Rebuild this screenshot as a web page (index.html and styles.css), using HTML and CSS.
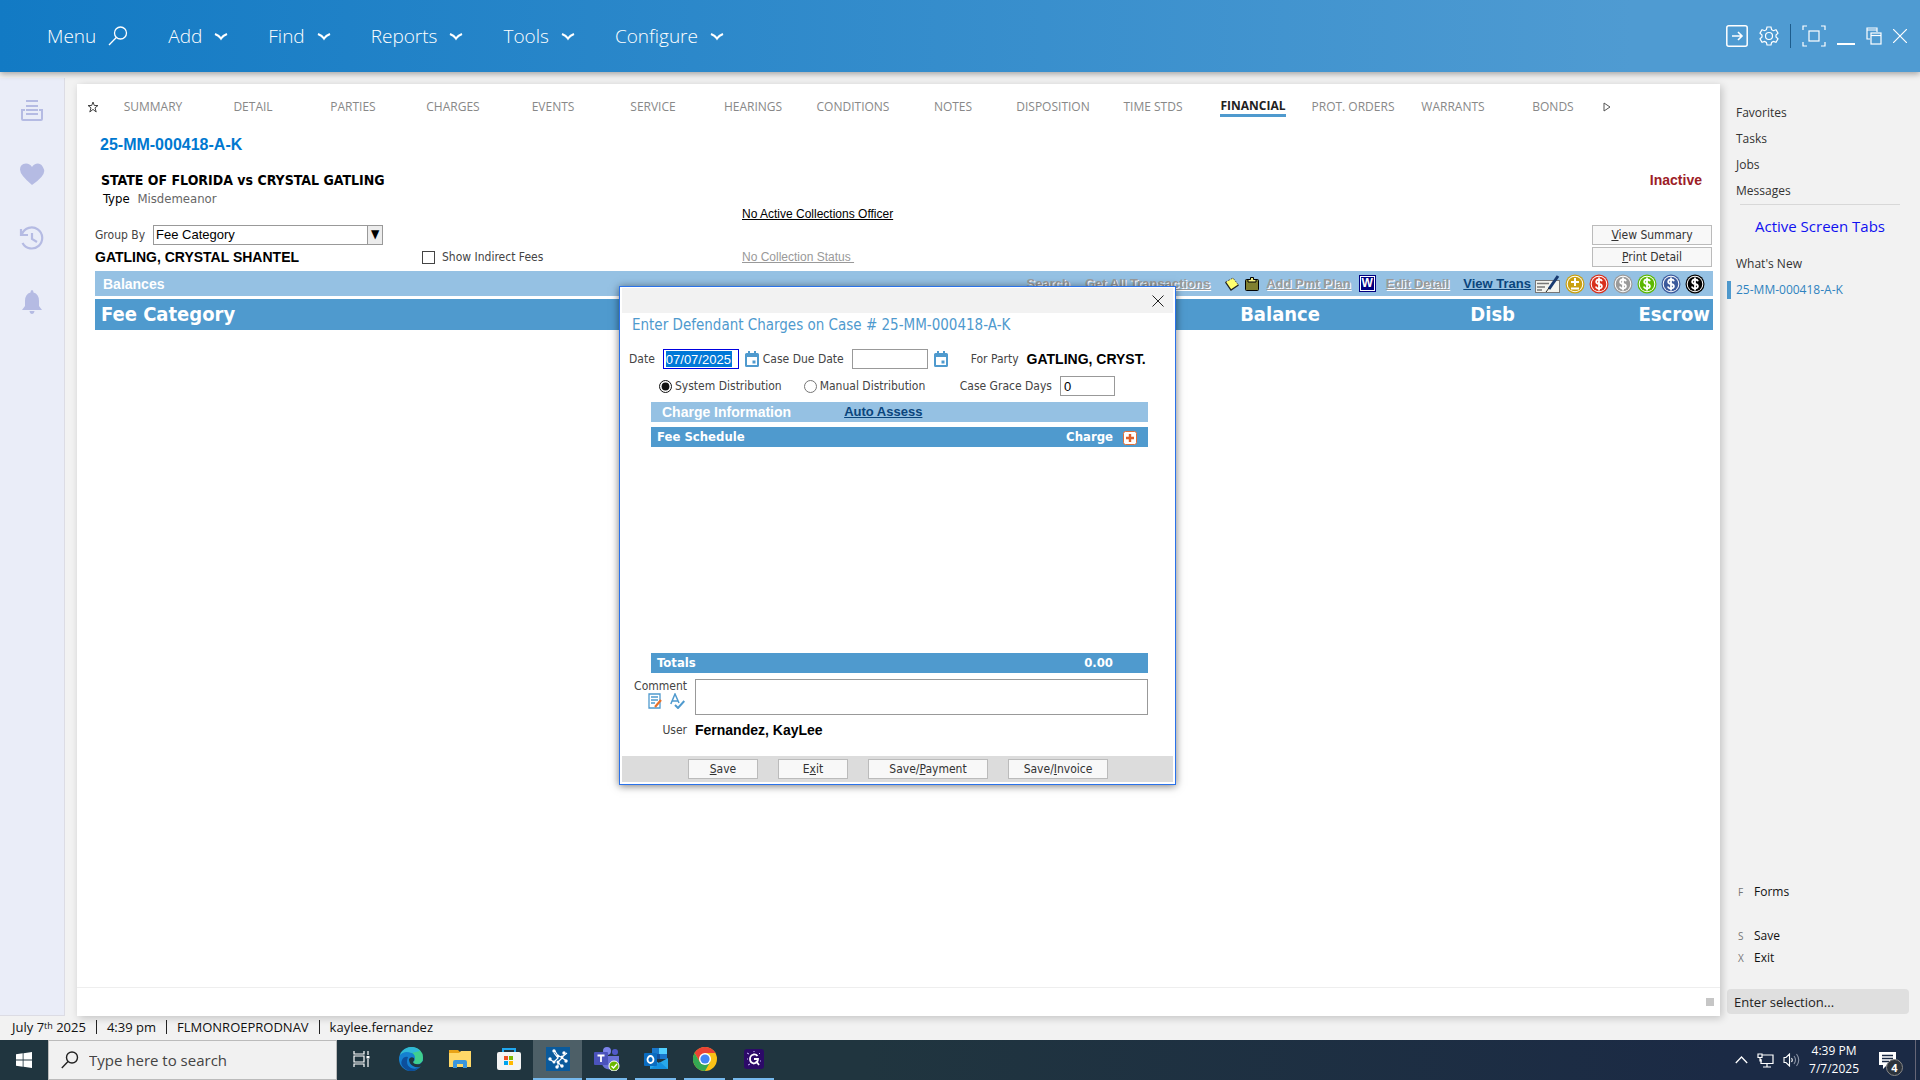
FILE: index.html
```html
<!DOCTYPE html>
<html lang="en">
<head>
<meta charset="utf-8">
<title>25-MM-000418-A-K - Financial</title>
<link rel="stylesheet" href="styles.css">
</head>
<body>
<svg class="defs" width="0" height="0" aria-hidden="true">
  <symbol id="chev" viewBox="0 0 14 10"><path d="M1 3Q5 4.500 7 7.500Q9 4.500 13 3" fill="none" stroke="currentColor" stroke-width="2.200"/></symbol>
  <symbol id="cal" viewBox="0 0 14 16"><path d="M3 0h2v2h4V0h2v2h1.500Q14 2 14 3.500v11Q14 16 12.500 16h-11Q0 16 0 14.500v-11Q0 2 1.500 2H3z" fill="#4f9ace"/><path d="M2 6h10v8H2z" fill="#fff"/><path d="M7.500 9.500h3v3h-3z" fill="#4f9ace"/></symbol>
  <symbol id="coin" viewBox="0 0 20 20"><circle cx="10" cy="10" r="9.500" fill="currentColor"/><circle cx="10" cy="10" r="8.300" fill="#fff"/><circle cx="10" cy="10" r="7.300" fill="currentColor"/><path d="M13 7.200Q12.500 5.500 10 5.500T7.200 7.700Q7.200 9.500 10 10T12.900 12.300Q12.800 14.500 10 14.500T7 12.500M10 3.500v13" fill="none" stroke="#fff" stroke-width="1.800"/></symbol>
</svg>

<header class="topbar">
  <nav class="menu">
    <button type="button">Menu <svg width="20" height="20" viewBox="0 0 20 20" fill="none" stroke="currentColor" stroke-width="1.300"><circle cx="12.500" cy="7" r="6"/><path d="M8.300 11.500L1 19"/></svg></button>
    <button type="button">Add <svg width="14" height="10"><use href="#chev"/></svg></button>
    <button type="button">Find <svg width="14" height="10"><use href="#chev"/></svg></button>
    <button type="button">Reports <svg width="14" height="10"><use href="#chev"/></svg></button>
    <button type="button">Tools <svg width="14" height="10"><use href="#chev"/></svg></button>
    <button type="button">Configure <svg width="14" height="10"><use href="#chev"/></svg></button>
  </nav>
  <div class="win-tools">
    <button type="button" aria-label="Go"><svg width="22" height="22" viewBox="0 0 22 22" fill="none" stroke="#fff"><rect x=".8" y=".8" width="20.400" height="20.400" rx="2" stroke-width="1.500"/><path d="M6 11h10M12 7l4 4-4 4" stroke-width="1.600"/></svg></button>
    <button type="button" aria-label="Settings"><svg width="20" height="20" viewBox="0 0 20 20" fill="none" stroke="#fff" stroke-width="1.200"><path d="M8 1h4l.6 2.700 1.800 1 2.600-.9 2 3.400-2 1.900v1.900l2 1.900-2 3.400-2.600-.9-1.800 1L12 19H8l-.6-2.600-1.800-1-2.600.9-2-3.400 2-1.900V9.100L1 7.200l2-3.400 2.600.9 1.800-1z"/><circle cx="10" cy="10" r="3.500"/></svg></button>
    <span class="divider"></span>
    <button type="button" aria-label="Full screen"><svg width="24" height="22" viewBox="0 0 24 22" fill="none" stroke="#fff" stroke-width="1.200"><path d="M5 1H1v4M19 1h4v4M5 21H1v-4M19 21h4v-4"/><rect x="7" y="6" width="10" height="10"/></svg></button>
    <button type="button" aria-label="Minimize"><svg width="18" height="18" viewBox="0 0 18 18"><path d="M0 16h18v2H0z" fill="#fff"/></svg></button>
    <button type="button" aria-label="Restore"><svg width="16" height="18" viewBox="0 0 16 18" fill="none" stroke="#fff" stroke-width="1.200"><path d="M4 12H1V1h10v4M1 3h10"/><rect x="5" y="6" width="10" height="11"/><path d="M5 8.500h10"/></svg></button>
    <button type="button" aria-label="Close"><svg width="14" height="14" viewBox="0 0 14 14" stroke="#fff" stroke-width="1.200"><path d="M0 0l14 14M14 0L0 14"/></svg></button>
  </div>
</header>

<div class="workspace">
  <aside class="rail">
    <button type="button" aria-label="Queue"><svg width="24" height="24" viewBox="0 0 24 24" fill="none" stroke="#b5bbe3" stroke-width="2"><path d="M6 3h12M6 8h12M6 12h12M6 16h12"/><path d="M5 12H2v9q0 1 1 1h18q1 0 1-1v-9h-3"/></svg></button>
    <button type="button" aria-label="Favorites"><svg width="26" height="24" viewBox="0 0 26 24" fill="#b5bbe3"><path d="M13 23Q1 13 1 7.500T7 1.500q4 0 6 3.500 2-3.500 6-3.500t6 6T13 23z"/></svg></button>
    <button type="button" aria-label="History"><svg width="26" height="24" viewBox="0 0 26 24" fill="none" stroke="#b5bbe3" stroke-width="2.200"><path d="M3 8a10.500 10.500 0 1 1 .5 9M2 3v6h7M13 7v6l5 3"/></svg></button>
    <button type="button" aria-label="Alerts"><svg width="24" height="24" viewBox="0 0 24 24" fill="#b5bbe3"><path d="M12 0q1.500 0 1.500 2.500Q19 4 19 11v5l3 4H2l3-4v-5q0-7 5.500-8.500Q10.500 0 12 0zM9.500 21h5q-.5 3-2.500 3t-2.500-3z"/></svg></button>
  </aside>

  <main class="panel">
    <nav class="tabs">
      <svg class="star" width="12" height="12" viewBox="0 0 12 12" fill="none" stroke="#444"><path d="M6 1l1.300 3.500H11L8 6.800 9.200 11 6 8.400 2.800 11 4 6.800 1 4.500h3.700z"/></svg>
      <a href="#">SUMMARY</a><a href="#">DETAIL</a><a href="#">PARTIES</a><a href="#">CHARGES</a><a href="#">EVENTS</a><a href="#">SERVICE</a><a href="#">HEARINGS</a><a href="#">CONDITIONS</a><a href="#">NOTES</a><a href="#">DISPOSITION</a><a href="#">TIME STDS</a><a href="#" class="on"><span>FINANCIAL</span></a><a href="#">PROT. ORDERS</a><a href="#">WARRANTS</a><a href="#">BONDS</a>
      <svg width="8" height="10" viewBox="0 0 8 10" fill="none" stroke="#555"><path d="M1 1v8l6-4z"/></svg>
    </nav>

    <section class="case">
      <div class="case-left">
        <h1>25-MM-000418-A-K</h1>
        <h2>STATE OF FLORIDA vs CRYSTAL GATLING</h2>
        <p class="type"><span>Type</span> Misdemeanor</p>
        <div class="group"><label for="group">Group By</label><div class="pick"><select id="group"><option>Fee Category</option></select></div></div>
        <div class="party"><strong>GATLING, CRYSTAL SHANTEL</strong><label><input type="checkbox"> Show Indirect Fees</label></div>
      </div>
      <div class="case-mid"><a href="#">No Active Collections Officer</a><a href="#" class="off">No Collection Status&nbsp;</a></div>
      <div class="case-right"><strong>Inactive</strong><button type="button" class="btn"><u>V</u>iew Summary</button><button type="button" class="btn"><u>P</u>rint Detail</button></div>
    </section>

    <section class="balances">
      <div class="bar tools">
        <h3>Balances</h3>
        <a href="#" class="dis search">Search</a>
        <a href="#" class="dis all">Get All Transactions</a>
        <svg width="14" height="14" viewBox="0 0 14 14"><path d="M.5 5L8 1l5.500 7L6 13z" fill="#ffff70"/><path d="M.5 5L6 13l7.500-5" fill="none" stroke="#222" stroke-width="1.300"/><path d="M.5 5L8 1l5.500 7" fill="none" stroke="#555" stroke-dasharray="2 1"/></svg>
        <svg class="clip" width="14" height="14" viewBox="0 0 14 14"><rect x=".5" y="2.500" width="13" height="11" rx="1" fill="#808030" stroke="#000"/><path d="M3 5V2.500h2.500V.5h3v2H11V5z" fill="#f4f080" stroke="#000"/></svg>
        <a href="#" class="dis plan">Add Pmt Plan</a>
        <span class="word">W</span>
        <a href="#" class="dis edit">Edit Detail</a>
        <a href="#" class="view">View Trans</a>
        <svg class="check" width="26" height="20" viewBox="0 0 26 20"><rect x=".5" y="6.500" width="24" height="12" fill="#f4f4ee" stroke="#777"/><path d="M2 9.500h12M2 13h8M2 16h5" stroke="#777" stroke-width="1.500"/><path d="M23 2L14 15" stroke="#183a70" stroke-width="3"/><path d="M14 14l-3 4" stroke="#222"/></svg>
        <svg class="coin gold" width="20" height="20" viewBox="0 0 20 20"><circle cx="10" cy="10" r="9.500" fill="currentColor"/><circle cx="10" cy="10" r="8.300" fill="#fff"/><circle cx="10" cy="10" r="7.300" fill="currentColor"/><path d="M10 4v8M6 8h8M6 14.500h8" stroke="#fff" stroke-width="2"/></svg>
        <svg class="coin red" width="20" height="20"><use href="#coin"/></svg>
        <svg class="coin gray" width="20" height="20"><use href="#coin"/></svg>
        <svg class="coin green" width="20" height="20"><use href="#coin"/></svg>
        <svg class="coin blue" width="20" height="20"><use href="#coin"/></svg>
        <svg class="coin black" width="20" height="20"><use href="#coin"/></svg>
      </div>
      <table class="sums"><thead><tr><th>Fee Category</th><th>Balance</th><th>Disb</th><th>Escrow</th></tr></thead></table>
    </section>

    <div class="panel-foot"><span></span></div>

    <form class="dialog" role="dialog" aria-labelledby="dlg-title">
      <div class="dlg-top"><button type="button" aria-label="Close"><svg width="12" height="12" viewBox="0 0 12 12" stroke="#222"><path d="M.5 .5l11 11M11.500 .5l-11 11"/></svg></button></div>
      <h2 id="dlg-title">Enter Defendant Charges on Case # 25-MM-000418-A-K</h2>
      <div class="row dates">
        <label for="date">Date</label><input id="date" class="focus" type="text" value="07/07/2025"><svg width="14" height="16"><use href="#cal"/></svg>
        <label for="due" class="due">Case Due Date</label><input id="due" type="text"><svg width="14" height="16"><use href="#cal"/></svg>
        <span class="for">For Party</span><strong>GATLING, CRYST.</strong>
      </div>
      <div class="row dist">
        <label><input type="radio" name="dist" checked>System Distribution</label>
        <label class="manual"><input type="radio" name="dist">Manual Distribution</label>
        <label for="grace" class="grace">Case Grace Days</label><input id="grace" type="text" value="0">
      </div>
      <div class="bar info"><h3>Charge Information</h3><a href="#">Auto Assess</a></div>
      <table class="fees">
        <thead><tr><th>Fee Schedule</th><th>Charge</th><th class="act"><button type="button" aria-label="Add fee"><svg width="14" height="14" viewBox="0 0 14 14"><rect x=".5" y=".5" width="13" height="13" rx="2" fill="#fff" stroke="#e0703a"/><path d="M7 3v8M3 7h8" stroke="#e0602a" stroke-width="2.400"/></svg></button></th></tr></thead>
        <tbody><tr><td colspan="3"></td></tr></tbody>
        <tfoot><tr><th>Totals</th><th>0.00</th><th></th></tr></tfoot>
      </table>
      <div class="row comment">
        <div class="c-label"><label for="comment">Comment</label><div>
          <svg width="14" height="16" viewBox="0 0 14 16" fill="none" stroke="#4f9ace" stroke-width="1.300"><path d="M1 1h11v14H1zM3 4h7M3 7h7M3 10h4"/><path d="M13 7l-6 7" stroke="#e8702a" stroke-width="2.200"/></svg>
          <svg width="15" height="16" viewBox="0 0 15 16" fill="none" stroke="#4f9ace" stroke-width="1.500"><path d="M.8 11L5 1l4 9M2.200 8h5.500"/><path d="M5 12l3 3 6.300-7" stroke-width="2"/></svg>
        </div></div>
        <textarea id="comment" rows="2"></textarea>
      </div>
      <div class="row user"><span>User</span><strong>Fernandez, KayLee</strong></div>
      <div class="dlg-foot"><button type="button" class="btn s"><u>S</u>ave</button><button type="button" class="btn s">E<u>x</u>it</button><button type="button" class="btn l">Save/<u>P</u>ayment</button><button type="button" class="btn m">Save/<u>I</u>nvoice</button></div>
    </form>
  </main>

  <aside class="side">
    <nav class="links"><a href="#">Favorites</a><a href="#">Tasks</a><a href="#">Jobs</a><a href="#">Messages</a></nav>
    <h2>Active Screen Tabs</h2>
    <nav class="links new"><a href="#">What's New</a><a href="#" class="cur">25-MM-000418-A-K</a></nav>
    <nav class="keys"><a href="#" class="forms"><kbd>F</kbd>Forms</a><a href="#"><kbd>S</kbd>Save</a><a href="#"><kbd>X</kbd>Exit</a></nav>
    <input type="text" placeholder="Enter selection..." aria-label="Enter selection">
  </aside>
</div>

<footer class="status"><span>July 7<sup>th</sup> 2025</span><i></i><span>4:39 pm</span><i></i><span>FLMONROEPRODNAV</span><i></i><span>kaylee.fernandez</span></footer>

<div class="taskbar">
  <button type="button" class="start" aria-label="Start"><svg width="16" height="16" viewBox="0 0 16 16" fill="#fff"><path d="M0 2.300l6.700-1v6.300H0zM7.500 1.200L16 0v7.600H7.500zM0 8.400h6.700v6.300L0 13.700zM7.500 8.400H16V16l-8.500-1.200z"/></svg></button>
  <div class="find"><svg width="18" height="18" viewBox="0 0 18 18" fill="none" stroke="#222" stroke-width="1.400"><circle cx="11" cy="6.500" r="5.500"/><path d="M7 10.500L.8 17"/></svg><input type="text" placeholder="Type here to search" aria-label="Search"></div>
  <button type="button" class="app" aria-label="Task view"><svg width="18" height="16" viewBox="0 0 18 16" fill="none" stroke="#fff" stroke-width="1.200"><path d="M1 0v3h10V0M1 16v-3h10v3M1 5h10v6H1zM15 0v4M15 8v8"/><path d="M13.500 5h3v2.500h-3z" fill="#fff" stroke="none"/></svg></button>
  <button type="button" class="app" aria-label="Edge"><svg width="24" height="24" viewBox="0 0 24 24"><circle cx="12" cy="12" r="12" fill="#1580d0"/><path d="M1 8Q5 0 13 0q11 1 11 11 0 6-6 6-4 0-4-2 2-1 2-4 0-5-6-6Q4 4 1 8z" fill="#3fcf8f"/><path d="M1 8Q4 1 12 0q6 0 9 4l-8 2Q5 3 1 8z" fill="#30b8d8"/><path d="M9 10q-3 8 3 11 6 2 9-2-4 6-11 5Q0 20 3 13q2-4 6-3z" fill="#0c4f9c"/><path d="M10 12q2-3 5-1 1 2-1 4 1 3 7 2l3-3v4q-5 4-10 1-4-2-4-7z" fill="#20353f"/></svg></button>
  <button type="button" class="app" aria-label="Explorer"><svg width="22" height="20" viewBox="0 0 22 20"><path d="M0 1h9l2 2h11v15H0z" fill="#e8a317"/><path d="M0 4h10l2-2h10v16H0z" fill="#ffd868"/><path d="M4 19v-6q0-2 2-2h10q2 0 2 2v6h-4v-4H8v4z" fill="#3a96dd"/></svg></button>
  <button type="button" class="app" aria-label="Store"><svg width="24" height="24" viewBox="0 0 24 24"><path d="M6 6V2h12v4" fill="none" stroke="#20a8f0" stroke-width="2"/><rect y="5" width="24" height="18" rx="2" fill="#f4f4f4"/><path d="M7 9h4v4H7z" fill="#f05022"/><path d="M12 9h4v4h-4z" fill="#7fba00"/><path d="M7 14h4v4H7z" fill="#00a4ef"/><path d="M12 14h4v4h-4z" fill="#ffb900"/></svg></button>
  <button type="button" class="app run active" aria-label="Court software"><svg width="24" height="24" viewBox="0 0 24 24"><path d="M0 0h24v24H0z" fill="#0a5a9c"/><path d="M3 12l5 3 4-4-4-5M9 4l3 5 4 1 5-4M21 14l-5-3-4 4 4 5M12 20l0-5" fill="none" stroke="#fff" stroke-width="1.200"/><g fill="#fff"><circle cx="8" cy="4" r="1.700"/><circle cx="12" cy="9" r="1.500"/><circle cx="18" cy="6" r="1.700"/><circle cx="4" cy="12" r="1.700"/><circle cx="8" cy="15" r="1.500"/><circle cx="16" cy="10" r="1.500"/><circle cx="20" cy="14" r="1.700"/><circle cx="12" cy="15" r="1.500"/><circle cx="11" cy="20" r="1.700"/><circle cx="16" cy="19" r="1.700"/></g></svg></button>
  <button type="button" class="app run" aria-label="Teams"><svg width="26" height="24" viewBox="0 0 26 24"><circle cx="13" cy="4" r="4" fill="#7b83eb"/><circle cx="21" cy="5" r="3" fill="#5059c9"/><path d="M8 9h17v8q-1 5-6 5-9 2-11-5z" fill="#6a72d8"/><rect y="5" width="14" height="13" rx="1" fill="#4b53bc"/><path d="M3.500 8.500h7M7 8.500V15" stroke="#fff" stroke-width="1.800"/><circle cx="20" cy="19" r="5" fill="#6bb700" stroke="#fff"/><path d="M17.500 19l2 2 3.500-4" fill="none" stroke="#fff" stroke-width="1.400"/></svg></button>
  <button type="button" class="app run" aria-label="Outlook"><svg width="24" height="24" viewBox="0 0 24 24"><path d="M8 1h15v11H8z" fill="#1a78cc"/><path d="M15 1h8v6h-8z" fill="#50d0ff"/><path d="M8 7h8v5H8z" fill="#1050a0"/><path d="M6 11l9 5 9-5v11H6z" fill="#28a8ea"/><path d="M6 22l10-7 8 7z" fill="#1490df"/><rect y="6" width="13" height="13" rx="1" fill="#0a6cc0"/><ellipse cx="6.500" cy="12.500" rx="3" ry="3.500" fill="none" stroke="#fff" stroke-width="1.800"/></svg></button>
  <button type="button" class="app run" aria-label="Chrome"><svg width="24" height="24" viewBox="0 0 24 24"><circle cx="12" cy="12" r="12" fill="#fbc116"/><path d="M1.600 6A12 12 0 0 1 22.400 6H12L6.800 15z" fill="#ea4335"/><path d="M1.600 6A12 12 0 0 0 12 24l5.200-9H6.800z" fill="#34a853"/><circle cx="12" cy="12" r="6" fill="#fff"/><circle cx="12" cy="12" r="4.600" fill="#4285f4"/></svg></button>
  <button type="button" class="app run" aria-label="Assistant"><svg width="20" height="20" viewBox="0 0 20 20"><rect width="20" height="20" rx="3" fill="#2c0a68"/><path d="M13.500 7Q12 5 9.500 5.500 6 6.500 6 10t3.500 4.500Q14 14 14 10h-4M12 12l3 4" fill="none" stroke="#fff" stroke-width="1.800"/><path d="M3 4l2 1M3 10h1M4 16l2-1M10 2v1M16 4l-1 1M17 12h-1" stroke="#c9b8ff"/></svg></button>
  <div class="tray">
    <svg width="13" height="8" viewBox="0 0 13 8" fill="none" stroke="#fff" stroke-width="1.300"><path d="M.8 7l5.700-6 5.700 6"/></svg>
    <svg width="17" height="15" viewBox="0 0 17 15" fill="none" stroke="#fff" stroke-width="1.200"><path d="M5 2h11v8.500H4V6M10 10.500v3M6 14h8M1 1h4v3.500H1zM3 4.500V8h2"/></svg>
    <svg width="17" height="14" viewBox="0 0 17 14" fill="none" stroke="#fff" stroke-width="1.100"><path d="M1 4.500h2L6.500 1v12L3 9.500H1zM8.500 5q1.500 2 0 4"/><path d="M11 3q3 4 0 8M13.500 1q4.500 6 0 12" stroke="#8a93a5"/></svg>
    <div class="clock"><span>4:39 PM</span><span>7/7/2025</span></div>
    <div class="note"><svg width="17" height="17" viewBox="0 0 17 17"><path d="M0 0h17v13H8l-4 4v-4H0z" fill="#fff"/><path d="M3 3.500h11M3 6.500h11M3 9.500h7" stroke="#1b2a45" stroke-width="1.300"/></svg><b>4</b></div>
    <span class="peek"></span>
  </div>
</div>
</body>
</html>
```
FILE: styles.css
```css
:root {
  --ui: "Open Sans", "Noto Sans", sans-serif;
  --form: "DejaVu Sans Condensed", "DejaVu Sans", sans-serif;
  --arial: "Liberation Sans", Arial, sans-serif;
  --blue: #4f9ace;
  --pale: #95c1e3;
}
* { box-sizing: border-box; }
body {
  margin: 0;
  min-height: 100vh;
  display: flex;
  flex-direction: column;
  background: #f2f2f2;
  font: 12px/16px var(--form);
  color: #444;
}
.defs { position: absolute; }
h1, h2, h3, p { margin: 0; }
a { color: inherit; text-decoration: none; }
button { font: inherit; color: inherit; border: 0; background: none; padding: 0; }
input, textarea, select { font: 13px/16px var(--arial); color: #000; border: 1px solid #999; border-radius: 0; background: #fff; margin: 0; }
svg { display: block; flex: none; }

.topbar {
  height: 72px;
  display: flex;
  justify-content: space-between;
  padding: 0 13px 0 47px;
  background: linear-gradient(90deg, #127ac4, #4f9bd2 85%);
  box-shadow: 0 2px 6px #0005;
  color: #fff;
  z-index: 2;
}
.menu { display: flex; gap: 40px; font: 300 19px/24px var(--ui); }
.menu button { display: flex; align-items: center; gap: 12px; }
.win-tools { display: flex; align-items: center; gap: 11px; }
.divider { width: 1px; height: 24px; background: #1d5c8c; }

.workspace { flex: 1; display: flex; align-items: stretch; }
.rail {
  width: 65px;
  margin-top: 6px;
  padding-top: 20px;
  display: flex;
  flex-direction: column;
  align-items: center;
  gap: 40px;
  background: #eaedf8;
  border-right: 1px solid #dcdce4;
  border-bottom: 1px solid #dcdce4;
}
.panel {
  position: relative;
  flex: 1;
  min-width: 0;
  margin: 12px 0 0 12px;
  display: flex;
  flex-direction: column;
  background: #fff;
  box-shadow: 2px 2px 8px #0003;
}
.tabs { display: flex; align-items: center; padding: 12px 0 0 10px; font: 12px/20px var(--ui); color: #888; }
.tabs a { width: 100px; text-align: center; }
.star { margin-right: 4px; }
.tabs .on { color: #222; font-weight: 700; }
.on span { display: inline-block; line-height: 17px; border-bottom: 3px solid var(--blue); }

.case { display: flex; padding: 18px 8px 0 18px; height: 154px; }
.case-left { width: 647px; }
.case h1 { font: bold 16px/20px var(--arial); color: #0078d0; padding-left: 5px; }
.case h2 { font: bold 14px/18px var(--form); color: #000; padding: 16px 0 0 6px; }
.type { padding-left: 8px; font-size: 13px; line-height: 20px; color: #666; }
.type span { color: #000; margin-right: 4px; }
.group { display: flex; align-items: center; gap: 8px; padding-top: 16px; }
.pick { position: relative; }
.pick::after { content: "▼"; position: absolute; right: 1px; top: 1px; width: 14px; height: 18px; background: #ececec; border-left: 1px solid #999; color: #000; font-size: 12px; line-height: 17px; text-align: center; pointer-events: none; }
.pick select { display: block; width: 230px; height: 20px; padding: 0 2px; appearance: none; }
.party { display: flex; align-items: center; padding-top: 2px; }
.party strong { width: 327px; font: bold 14px/20px var(--arial); color: #000; }
.party label { display: flex; align-items: center; gap: 7px; }
.party input { appearance: none; width: 13px; height: 13px; border-color: #444; }
.case-mid { flex: 1; padding-top: 71px; display: flex; flex-direction: column; align-items: flex-start; gap: 27px; font: 12px/16px var(--arial); color: #000; }
.case-mid a, .bar a { text-decoration: underline; }
.case-mid .off { color: #999; }
.case-right { display: flex; flex-direction: column; align-items: flex-end; gap: 2px; padding-top: 35px; }
.case-right strong { font: bold 14px/20px var(--arial); color: #9c2026; margin: 0 10px 33px 0; }
.btn { height: 20px; background: #f8f8f8; border: 1px solid #bbb; color: #333; }
.case-right .btn { width: 120px; }

.balances { flex: 1; padding: 0 7px 0 18px; }
.bar { display: flex; align-items: center; background: var(--pale); }
.bar h3 { font: bold 14px/20px var(--arial); color: #fff; }
.bar a { font: bold 13px/16px var(--arial); color: #0a457c; }
.tools { height: 25px; padding: 0 8px; }
.tools h3 { flex: 1; }
.tools .dis { color: #9a9a9a; text-shadow: 1px 1px #fff; }
.search { margin-right: 15px; }
.all { margin-right: 15px; }
.clip { margin-left: 6px; }
.plan { margin: 0 8px 0 7px; }
.word { width: 17px; height: 17px; border: 1px solid #000080; outline: 1px solid #fff; outline-offset: -2px; background: #000080; color: #fff; font: bold 12px/15px var(--arial); text-align: center; }
.edit { margin: 0 14px 0 10px; }
.check { margin: 0 4px; }
.coin { margin-left: 4px; }
.gold { color: #c9a010; margin-left: 0; }
.red { color: #d8301c; }
.gray { color: #9a9a9a; }
.green { color: #5cb800; }
.blue { color: #3c5a9c; }
.black { color: #000; }
table { width: 100%; border-collapse: collapse; }
.sums { margin-top: 3px; background: var(--blue); color: #fff; font: bold 20px/31px var(--form); table-layout: fixed; }
.sums th { padding: 0 3px 0 0; text-align: right; width: 195px; }
.sums th:first-child { width: auto; text-align: left; padding-left: 6px; }
.panel-foot { height: 29px; border-top: 1px solid #eee; display: flex; justify-content: flex-end; align-items: center; padding-right: 6px; }
.panel-foot span { width: 8px; height: 8px; background: #c6c6c6; }

/* modal over the case panel */
.dialog {
  position: absolute;
  top: 202px;
  left: 0;
  right: 2px;
  margin: 0 auto;
  width: 557px;
  padding: 1px 2px 2px;
  background: #fff;
  border: 1px solid #2a72ea;
  box-shadow: 0 1px 8px #0008;
}
.dlg-top { height: 25px; background: #f2f2f2; display: flex; justify-content: flex-end; align-items: center; padding-right: 9px; }
.dialog h2 { font: 15px/24px var(--form); color: var(--blue); padding-left: 10px; }
.row { display: flex; align-items: center; }
.dates { padding: 12px 22px 0 7px; }
.dates input { width: 76px; height: 20px; margin: 0 6px 0 8px; padding: 0 2px; }
.dates .focus { border: 1px solid #0000e0; color: #fff; background: linear-gradient(#0078d7, #0078d7) 2px 1px / 66px 16px no-repeat #fff; }
.due { margin-left: 4px; }
.for { margin: 0 8px 0 23px; white-space: nowrap; }
.row strong { font: bold 14px/20px var(--arial); color: #000; }
.dates strong { white-space: nowrap; }
.dist { padding: 7px 58px 6px 37px; }
.dist label { display: flex; align-items: center; gap: 3px; }
.dist input[type="radio"] { width: 13px; height: 13px; accent-color: #111; }
.manual { margin-left: 22px; }
.dist .grace { margin-left: auto; }
#grace { width: 55px; height: 20px; margin-left: 8px; padding: 0 3px; }
.info { height: 20px; margin: 0 25px 5px 29px; padding-left: 11px; gap: 53px; }
.fees { width: 497px; margin-left: 29px; color: #fff; font: bold 13px/20px var(--form); table-layout: fixed; }
.fees thead, .fees tfoot { background: var(--blue); }
.fees th { padding: 0; height: 20px; text-align: right; }
.fees th:first-child { text-align: left; padding-left: 6px; }
.fees .act { width: 35px; text-align: left; padding-left: 10px; }
.act svg { margin-top: 2px; }
.act button { display: block; }
.fees td { height: 206px; padding: 0; }
.comment { padding: 6px 25px 0 0; align-items: flex-start; gap: 8px; }
.c-label { width: 65px; display: flex; flex-direction: column; align-items: flex-end; line-height: 14px; }
.c-label div { display: flex; gap: 8px; padding-right: 2px; }
.comment textarea { display: block; flex: 1; height: 36px; resize: none; }
.user { gap: 8px; padding-top: 5px; }
.user span { width: 65px; text-align: right; }
.dlg-foot { margin-top: 16px; height: 26px; display: flex; align-items: center; gap: 20px; padding-left: 66px; background: #dcdcdc; }
.s { width: 70px; }
.m { width: 100px; }
.l { width: 120px; }

.side { width: 200px; padding: 28px 11px 2px 7px; display: flex; flex-direction: column; font: 12px/26px var(--ui); color: #333; }
.links { display: flex; flex-direction: column; padding-left: 9px; }
.side h2 { margin: 0 9px 0 13px; border-top: 1px solid #d8d8d8; padding: 8px 0 12px 15px; font: 15px/26px var(--ui); color: #1010f0; }
.new .cur { color: #2f83c0; line-height: 18px; margin: 4px 0 0 -9px; padding-left: 5px; border-left: 4px solid var(--blue); }
.keys { margin-top: auto; display: flex; flex-direction: column; padding: 0 0 20px 11px; line-height: 22px; color: #111; }
.keys kbd { display: inline-block; width: 16px; font: 10px/22px var(--ui); color: #777; }
.forms { margin-bottom: 22px; }
.side input { height: 25px; width: 100%; border: 0; border-radius: 4px; background: #dfdfdf; padding: 0 7px; font: 13px/20px var(--ui); }
.side input::placeholder { color: #222; }

.status { display: flex; align-items: center; gap: 10px; height: 24px; padding: 0 0 2px 12px; font: 13px/22px var(--ui); color: #111; }
.status i { width: 1px; height: 14px; background: #222; }
sup { font-size: 9px; line-height: 9px; vertical-align: 3px; }

.taskbar { height: 40px; display: flex; background: linear-gradient(90deg, #20353f 45%, #1b2a45 90%); color: #fff; }
.start { width: 48px; display: grid; place-items: center; }
.find { width: 289px; display: flex; align-items: center; gap: 10px; padding-left: 12px; background: #f1f1f1; border: 1px solid #bbb; }
.find input { border: 0; background: none; font: 15px/20px var(--ui); padding: 0; width: 200px; }
.find input::placeholder { color: #444; }
.app { width: 49px; display: grid; place-items: center; border-bottom: 2px solid transparent; background-clip: padding-box; }
.run { width: 41px; margin: 0 4px; border-color: #76b9ed; }
.active { width: 49px; margin: 0; background: #4d5f67; }
.tray { margin-left: auto; display: flex; align-items: center; gap: 9px; }
.clock { display: flex; flex-direction: column; align-items: center; font: 12px/18px var(--ui); margin: 0 11px 0 0; }
.note { position: relative; margin-right: 10px; }
.note b { position: absolute; left: 7px; top: 7px; width: 17px; height: 17px; border: 1px solid #888; border-radius: 50%; background: #2c333c; font: bold 11px/15px var(--ui); text-align: center; }
.peek { width: 5px; height: 40px; border-left: 1px solid #667; }
```
